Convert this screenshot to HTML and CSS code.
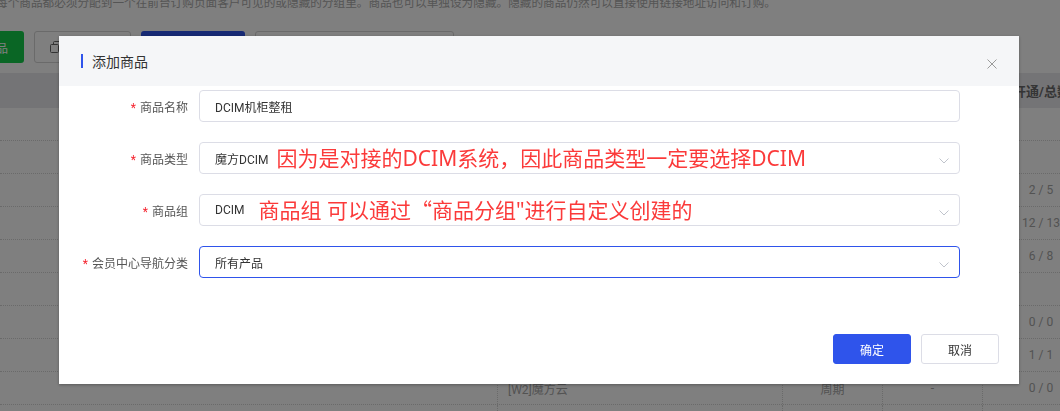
FILE: index.html
```html
<!DOCTYPE html>
<html lang="zh-CN">
<head>
<meta charset="utf-8">
<title>添加商品</title>
<link rel="stylesheet" href="styles.css">
</head>
<body>
<div class="page">
  <p class="desc">每个商品都必须分配到一个在前台订购页面客户可见的或隐藏的分组里。商品也可以单独设为隐藏。隐藏的商品仍然可以直接使用链接地址访问和订购。</p>
  <div class="toolbar">
    <button class="tb-btn tb-green">添加商品</button>
    <button class="tb-btn tb-outline"><svg class="tb-icon" viewBox="0 0 12 12" width="12" height="12"><rect x="0.5" y="3.5" width="8" height="8" rx="1"/><path d="M3.5 3.5V1.5a1 1 0 0 1 1-1h6a1 1 0 0 1 1 1v6a1 1 0 0 1-1 1H8.5"/></svg></button>
    <button class="tb-btn tb-blue"></button>
    <div class="tb-search"></div>
  </div>
  <div class="table">
    <div class="tr th"><div class="td"></div><div class="td"></div><div class="td c"></div><div class="td c"></div><div class="td c">开通/总数</div></div>
    <div class="tr"><div class="td"></div><div class="td"></div><div class="td c"></div><div class="td c"></div><div class="td c"></div></div>
    <div class="tr"><div class="td"></div><div class="td"></div><div class="td c"></div><div class="td c"></div><div class="td c"></div></div>
    <div class="tr"><div class="td"></div><div class="td"></div><div class="td c"></div><div class="td c"></div><div class="td c">2 / 5</div></div>
    <div class="tr"><div class="td"></div><div class="td"></div><div class="td c"></div><div class="td c"></div><div class="td c">12 / 13</div></div>
    <div class="tr"><div class="td"></div><div class="td"></div><div class="td c"></div><div class="td c"></div><div class="td c">6 / 8</div></div>
    <div class="tr"><div class="td"></div><div class="td"></div><div class="td c"></div><div class="td c"></div><div class="td c"></div></div>
    <div class="tr"><div class="td"></div><div class="td"></div><div class="td c"></div><div class="td c"></div><div class="td c">0 / 0</div></div>
    <div class="tr"><div class="td"></div><div class="td"></div><div class="td c"></div><div class="td c"></div><div class="td c">1 / 1</div></div>
    <div class="tr"><div class="td"></div><div class="td">[W2]魔方云</div><div class="td c">周期</div><div class="td c">-</div><div class="td c">0 / 0</div></div>
    <div class="tr"><div class="td"></div><div class="td"></div><div class="td c"></div><div class="td c"></div><div class="td c"></div></div>
  </div>
</div>

<div class="mask">
  <div class="modal">
    <div class="modal-head">
      <span class="bar"></span>
      <span class="title">添加商品</span>
      <svg class="close" viewBox="0 0 10 10" width="10" height="10"><path d="M0.5 0.5L9.5 9.5M9.5 0.5L0.5 9.5"/></svg>
    </div>
    <div class="modal-body">
      <div class="form-item">
        <label class="label"><i class="req">*</i>商品名称</label>
        <div class="field"><span class="val">DCIM机柜整租</span></div>
      </div>
      <div class="form-item">
        <label class="label"><i class="req">*</i>商品类型</label>
        <div class="field"><span class="val">魔方DCIM</span><span class="note note-type">因为是对接的DCIM系统，因此商品类型一定要选择DCIM</span><svg class="arrow" viewBox="0 0 10 6" width="10" height="6"><path d="M0.5 0.5L5 5L9.5 0.5"/></svg></div>
      </div>
      <div class="form-item">
        <label class="label"><i class="req">*</i>商品组</label>
        <div class="field"><span class="val">DCIM</span><span class="note note-group">商品组 可以通过<span class="q">“</span>商品分组"进行自定义创建的</span><svg class="arrow" viewBox="0 0 10 6" width="10" height="6"><path d="M0.5 0.5L5 5L9.5 0.5"/></svg></div>
      </div>
      <div class="form-item">
        <label class="label"><i class="req">*</i>会员中心导航分类</label>
        <div class="field active"><span class="val">所有产品</span><svg class="arrow" viewBox="0 0 10 6" width="10" height="6"><path d="M0.5 0.5L5 5L9.5 0.5"/></svg></div>
      </div>
    </div>
    <div class="modal-foot">
      <button class="btn btn-primary">确定</button>
      <button class="btn">取消</button>
    </div>
  </div>
</div>
</body>
</html>
```
FILE: styles.css
```css
html, body {
  margin: 0;
  padding: 0;
}
body {
  width: 1060px;
  height: 411px;
  overflow: hidden;
  position: relative;
  background: #fff;
  font-family: Roboto, "Noto Sans CJK SC", sans-serif;
}

/* ---------- background page ---------- */
.page {
  width: 1100px;
  height: 411px;
  overflow: hidden;
}
.desc {
  margin: -5px 0 0 -4px;
  font-size: 11.65px;
  line-height: 16px;
  height: 16px;
  color: #aaa;
  white-space: nowrap;
}
.toolbar {
  display: flex;
  gap: 10px;
  height: 32px;
  margin: 20px 0 0 -56px;
}
.tb-btn {
  height: 32px;
  box-sizing: border-box;
  border-radius: 3px;
  font-family: inherit;
  font-size: 12px;
  display: flex;
  align-items: center;
  justify-content: center;
  padding: 0;
}
.tb-green {
  width: 80px;
  background: #15cc4b;
  color: #fff;
  border: none;
}
.tb-outline {
  width: 97px;
  background: #fff;
  border: 1px solid #d4d4d4;
  color: #666;
  justify-content: flex-start;
  padding-left: 15px;
  gap: 6px;
}
.tb-icon {
  fill: none;
  stroke: #666;
  stroke-width: 1;
}
.tb-blue {
  width: 104px;
  background: #2f54eb;
  color: #fff;
  border: none;
}
.tb-search {
  width: 199px;
  height: 32px;
  box-sizing: border-box;
  border: 1px solid #d4d4d4;
  border-radius: 3px;
}
.table {
  margin-top: 10px;
  height: 338px;
  overflow: hidden;
}
.tr {
  display: grid;
  grid-template-columns: 498px 285px 100px 100px 117px;
  height: 33px;
  box-sizing: border-box;
  border-bottom: 1px dotted #d4d4d4;
}
.tr.th {
  height: 35px;
  background: #e9e9ec;
  border-bottom: none;
}
.td {
  display: flex;
  align-items: center;
  padding: 0 10px;
  font-size: 12px;
  color: #a6a6a6;
  border-right: 1px dotted #d4d4d4;
  white-space: nowrap;
  overflow: hidden;
}
.th .td {
  font-size: 13px;
  font-weight: bold;
  color: #6a6a6a;
  border-right: none;
}
.td.c {
  justify-content: center;
}

/* ---------- modal ---------- */
.mask {
  position: fixed;
  inset: 0;
  background: rgba(0, 0, 0, 0.5);
}
.modal {
  position: absolute;
  left: 59px;
  top: 36px;
  width: 960px;
  background: #fff;
  box-shadow: 0 1px 3px rgba(0, 0, 0, 0.3);
}
.modal-head {
  display: flex;
  align-items: center;
  height: 50px;
  background: #f5f6f8;
  padding: 0 22px 0 22px;
}
.bar {
  width: 2px;
  height: 14px;
  background: #2f54eb;
  margin-right: 9px;
}
.title {
  font-size: 14px;
  color: #333;
}
.close {
  margin-left: auto;
  margin-top: 5px;
  fill: none;
  stroke: #9a9a9a;
  stroke-width: 1;
}
.modal-body {
  padding: 4px 59px 0 0;
}
.form-item {
  display: flex;
  align-items: center;
  height: 32px;
  margin-bottom: 20px;
}
.form-item:last-child {
  margin-bottom: 0;
}
.label {
  width: 140px;
  box-sizing: border-box;
  padding-right: 11px;
  text-align: right;
  font-size: 12px;
  color: #555;
  flex-shrink: 0;
}
.req {
  font-style: normal;
  color: #f5222d;
  margin-right: 4px;
}
.field {
  flex: 1;
  height: 32px;
  box-sizing: border-box;
  border: 1px solid #dcdde6;
  border-radius: 4px;
  padding: 0 10px 0 15px;
  display: flex;
  align-items: center;
  font-size: 12px;
  color: #333;
}
.field.active {
  border-color: #2f54eb;
}
.val {
  white-space: nowrap;
}
.note {
  font-family: "Noto Sans", "Noto Sans CJK SC", sans-serif;
  font-size: 21px;
  line-height: 1;
  color: #fb3a3a;
  white-space: nowrap;
}
.note .q {
  font-family: "Noto Sans CJK SC", sans-serif;
}
.note-type {
  margin-left: 8px;
}
.note-group {
  margin-left: 14px;
}
.arrow {
  margin-left: auto;
  margin-top: 5px;
  flex-shrink: 0;
  fill: none;
  stroke: #c0c4cc;
  stroke-width: 1;
}
.modal-foot {
  display: flex;
  justify-content: flex-end;
  gap: 10px;
  padding: 56px 20px 20px 0;
}
.btn {
  width: 78px;
  height: 30px;
  box-sizing: border-box;
  border-radius: 3px;
  border: 1px solid #dcdde6;
  background: #fff;
  color: #333;
  font-family: inherit;
  font-size: 12px;
  padding: 0;
}
.btn-primary {
  background: #2f54eb;
  border-color: #2f54eb;
  color: #fff;
}
```
